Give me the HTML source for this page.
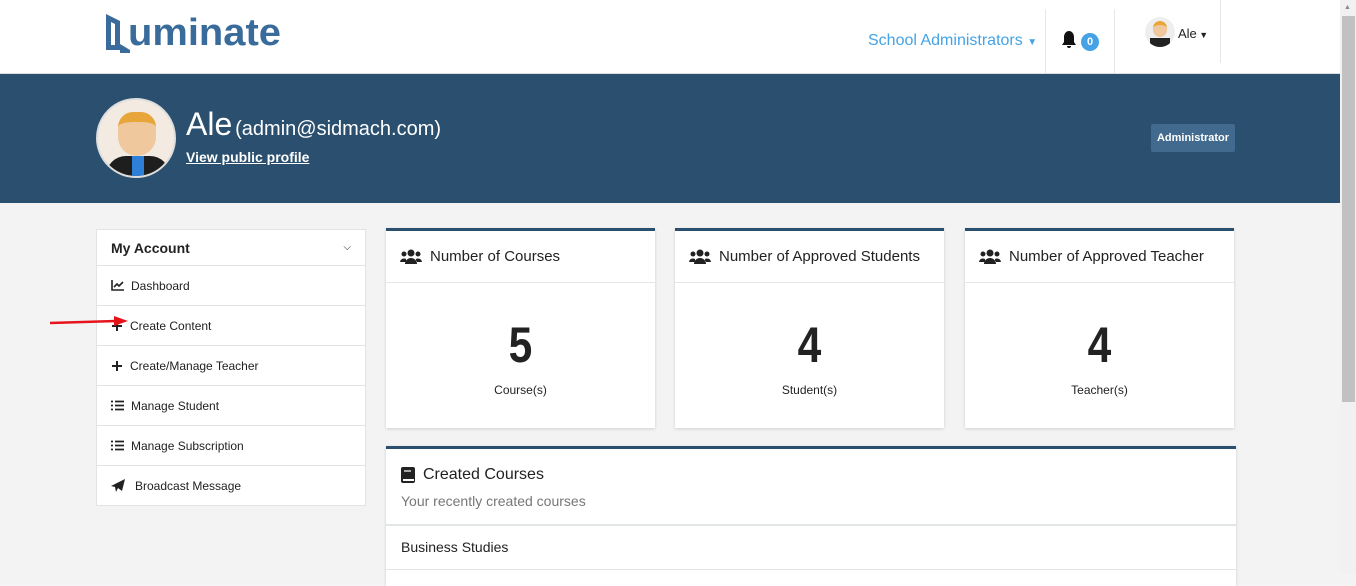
<!DOCTYPE html>
<html><head><meta charset="utf-8"><style>
*{box-sizing:border-box;margin:0;padding:0}
body{width:1356px;height:574px;overflow:hidden;background:#f3f3f3;font-family:"Liberation Sans",sans-serif;color:#222;position:relative}
.abs{position:absolute}
.hdr{left:0;top:0;width:1340px;height:74px;background:#fff;border-bottom:1px solid #ddd}
.ban{left:0;top:74px;width:1340px;height:129px;background:#2b4f6e}
.sb{left:1340px;top:0;width:16px;height:574px;background:#f1f1f1}
.thumb{left:1342px;top:16px;width:13px;height:386px;background:#c1c1c1}
.side{left:96px;top:229px;width:270px;height:277px;background:#fff;border:1px solid #e3e3e3}
.side .row{height:40px;border-top:1px solid #e3e3e3;display:flex;align-items:center;padding-left:14px;font-size:12px;color:#222}
.side .row svg{margin-right:7px}
.card{background:#fff;border-top:3px solid #2b4f6e;box-shadow:0 1px 3px rgba(0,0,0,.15)}
.card .t{height:52px;border-bottom:1px solid #e6e6e6;display:flex;align-items:center;padding-left:14px;font-size:15px;color:#222}
.card .t svg{margin-right:8px}
.num{text-align:center;font-size:50px;font-weight:bold;margin-top:34px;line-height:56px;transform:scaleX(.85)}
.lbl{text-align:center;font-size:12px;margin-top:10px}
</style></head><body>
<div class="abs hdr"></div>
<svg class="abs" style="left:104px;top:12px" width="28" height="42" viewBox="0 0 28 42"><path d="M2 2 L16 9 L16 38 L2 38 Z M7 10 L7 33 L11 33 L11 12 Z" fill="#3a6c9b" fill-rule="evenodd"/><path d="M16 32 L26 38 L26 41 L16 41Z" fill="#3a6c9b"/></svg>
<div class="abs" style="left:128px;top:12px;font-size:38px;font-weight:bold;color:#3a6c9b;transform:scaleX(1.05);transform-origin:left">uminate</div>
<div class="abs" style="left:868px;top:32px;font-size:16px;color:#45a3e5">School Administrators <span style="font-size:10px">▼</span></div>
<div class="abs" style="left:1045px;top:9px;width:1px;height:64px;background:#e6e6e6"></div>
<div class="abs" style="left:1114px;top:9px;width:1px;height:64px;background:#e6e6e6"></div>
<div class="abs" style="left:1220px;top:0;width:1px;height:63px;background:#e6e6e6"></div>
<svg class="abs" style="left:1061px;top:31px" width="16" height="18" viewBox="0 0 16 18"><path d="M8 0C5 0 3 3 3 6v5L1 14h14l-2-3V6c0-3-2-6-5-6z M6 15a2 2 0 0 0 4 0z" fill="#111"/></svg>
<div class="abs" style="left:1081px;top:33px;width:18px;height:18px;border-radius:9px;background:#45a3e5;color:#fff;font-size:11px;font-weight:bold;text-align:center;line-height:18px">0</div>
<div class="abs" style="left:1145px;top:17px;width:30px;height:30px;border-radius:15px;background:#eee;overflow:hidden"><div style="margin:4px 0 0 8px;width:14px;height:16px;border-radius:7px;background:#efc89e;border-top:4px solid #e8a53a"></div><div style="margin:1px 0 0 5px;width:20px;height:10px;background:#222"></div></div>
<div class="abs" style="left:1178px;top:26px;font-size:13px">Ale<span style="font-size:9px"> ▼</span></div>
<div class="abs ban"></div>
<div class="abs" style="left:96px;top:98px;width:80px;height:80px;border-radius:40px;background:#f3ebe2;border:2px solid #ddd;overflow:hidden">
<div style="position:absolute;left:20px;top:12px;width:38px;height:44px;border-radius:16px 16px 20px 20px;background:#efc89e;border-top:10px solid #e8a53a"></div>
<div style="position:absolute;left:8px;top:56px;width:64px;height:30px;border-radius:20px 20px 0 0;background:#1e1e1e"></div>
<div style="position:absolute;left:34px;top:56px;width:12px;height:24px;background:#2e7fd8"></div></div>
<div class="abs" style="left:186px;top:106px;color:#fff;font-size:32px">Ale <span style="font-size:20px;position:relative;left:-6px">(admin@sidmach.com)</span></div>
<div class="abs" style="left:186px;top:149px;color:#fff;font-size:14px;font-weight:bold;text-decoration:underline">View public profile</div>
<div class="abs" style="left:1151px;top:124px;width:84px;height:28px;background:#416a8e;border-radius:2px;color:#fff;font-size:11px;font-weight:bold;text-align:center;line-height:28px">Administrator</div>
<div class="abs side">
<div style="height:35px;display:flex;align-items:center;padding-left:14px;font-size:14px;font-weight:bold;justify-content:space-between;padding-right:14px">My Account<span style="font-size:10px;font-weight:normal">⌵</span></div>
<div class="row"><svg width="13" height="11"><path d="M1 0V10H13M3 7L6 4L8 6L12 2" stroke="#222" stroke-width="1.6" fill="none"/></svg>Dashboard</div>
<div class="row"><svg width="12" height="12"><path d="M6 1V11M1 6H11" stroke="#222" stroke-width="2"/></svg>Create Content</div>
<div class="row"><svg width="12" height="12"><path d="M6 1V11M1 6H11" stroke="#222" stroke-width="2"/></svg>Create/Manage Teacher</div>
<div class="row"><svg width="13" height="11"><path d="M4 1.5H13M4 5.5H13M4 9.5H13M0 1.5H2M0 5.5H2M0 9.5H2" stroke="#222" stroke-width="1.8"/></svg>Manage Student</div>
<div class="row"><svg width="13" height="11"><path d="M4 1.5H13M4 5.5H13M4 9.5H13M0 1.5H2M0 5.5H2M0 9.5H2" stroke="#222" stroke-width="1.8"/></svg>Manage Subscription</div>
<div class="row"><svg width="14" height="13" style="margin-right:10px"><path d="M14 0L0 7L4 8L5 13L7 9L11 12Z" fill="#222"/></svg>Broadcast Message</div>
</div>
<svg class="abs" style="left:50px;top:316px" width="80" height="14"><path d="M0 7L66 5" stroke="#e5141b" stroke-width="2.5"/><path d="M64 0L78 5L64 10Z" fill="#e5141b"/></svg>
<div class="abs card" style="left:386px;top:228px;width:269px;height:200px"><div class="t"><svg width="22" height="15" viewBox="0 0 22 15"><circle cx="11" cy="4" r="3.5" fill="#222"/><circle cx="4" cy="5" r="2.5" fill="#222"/><circle cx="18" cy="5" r="2.5" fill="#222"/><path d="M5 15a6 6 0 0 1 12 0z M0 13a4 4 0 0 1 6-3v3z M22 13a4 4 0 0 0-6-3v3z" fill="#222"/></svg>Number of Courses</div><div class="num">5</div><div class="lbl">Course(s)</div></div>
<div class="abs card" style="left:675px;top:228px;width:269px;height:200px"><div class="t"><svg width="22" height="15" viewBox="0 0 22 15"><circle cx="11" cy="4" r="3.5" fill="#222"/><circle cx="4" cy="5" r="2.5" fill="#222"/><circle cx="18" cy="5" r="2.5" fill="#222"/><path d="M5 15a6 6 0 0 1 12 0z M0 13a4 4 0 0 1 6-3v3z M22 13a4 4 0 0 0-6-3v3z" fill="#222"/></svg>Number of Approved Students</div><div class="num">4</div><div class="lbl">Student(s)</div></div>
<div class="abs card" style="left:965px;top:228px;width:269px;height:200px"><div class="t"><svg width="22" height="15" viewBox="0 0 22 15"><circle cx="11" cy="4" r="3.5" fill="#222"/><circle cx="4" cy="5" r="2.5" fill="#222"/><circle cx="18" cy="5" r="2.5" fill="#222"/><path d="M5 15a6 6 0 0 1 12 0z M0 13a4 4 0 0 1 6-3v3z M22 13a4 4 0 0 0-6-3v3z" fill="#222"/></svg>Number of Approved Teacher</div><div class="num">4</div><div class="lbl">Teacher(s)</div></div>
<div class="abs card" style="left:386px;top:446px;width:850px;height:140px">
<div style="padding:17px 0 0 15px;font-size:16px;display:flex;align-items:center"><svg width="14" height="16" style="margin-right:8px"><rect x="0" y="0" width="14" height="16" rx="2" fill="#222"/><rect x="3" y="3" width="7" height="2" fill="#aaa"/><rect x="2" y="12" width="11" height="2" fill="#fff"/></svg>Created Courses</div>
<div style="padding:9px 0 0 15px;font-size:14px;color:#777">Your recently created courses</div>
<div style="position:absolute;top:75px;left:0;right:0;height:46px;border-top:2px solid #e3e6e6;border-bottom:1px solid #e3e6e6;padding:13px 0 0 15px;font-size:14px">Business Studies</div>
</div>
<div class="abs sb"></div><div class="abs thumb"></div>
<div class="abs" style="left:1344px;top:4px;font-size:7px;color:#888">▲</div>
</body></html>
